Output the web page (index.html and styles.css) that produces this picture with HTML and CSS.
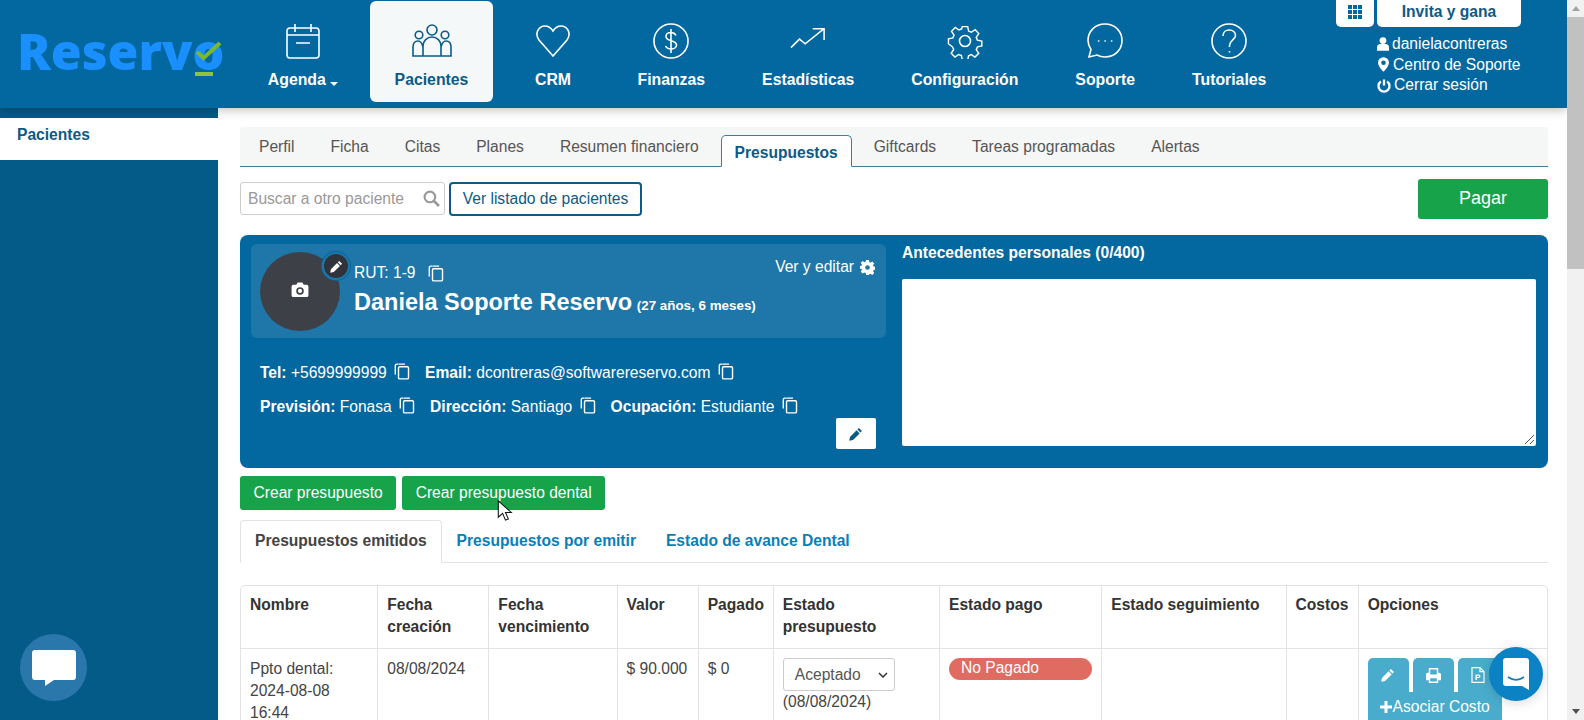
FILE: index.html
```html
<!DOCTYPE html>
<html lang="es">
<head>
<meta charset="utf-8">
<title>Reservo</title>
<link rel="stylesheet" href="styles.css">
</head>
<body>
<svg class="defs" width="0" height="0">
  <symbol id="copy" viewBox="0 0 16 18"><path d="M4 1.200h-1.600a1.500 1.500 0 0 0-1.500 1.500v9.600M5.600 4h8a1.300 1.300 0 0 1 1.300 1.300v10.200a1.300 1.300 0 0 1-1.300 1.300h-8a1.300 1.300 0 0 1-1.300-1.300V5.300a1.300 1.300 0 0 1 1.300-1.300zM4.300 1.200h7" fill="none" stroke="currentColor" stroke-width="1.500"/></symbol>
  <symbol id="pencil" viewBox="0 0 16 16"><path d="M11.300 1.200l3.500 3.500-1.700 1.700-3.500-3.500zM8.700 3.800l3.500 3.500-7.600 7.600-4.300.9.800-4.400z" fill="currentColor"/></symbol>
</svg>
<div class="page">
  <div class="viewport">
    <header class="topbar">
      <a class="logo"><span class="logo-text">Reservo</span>
        <svg class="logo-check" viewBox="0 0 30 36" width="30" height="36"><path d="M3 11l6.500 6L26 2" fill="none" stroke="#7ab82e" stroke-width="4"/><rect x="1" y="31" width="18" height="4" fill="#8cc63f"/></svg>
      </a>
      <nav class="mainnav">
        <a class="navitem nav-agenda">
          <svg class="navicon" viewBox="0 0 36 36"><rect x="2" y="5" width="32" height="30" rx="3"/><path d="M2 12h32M10 1v8M26 1v8M11 20h14"/></svg>
          <span>Agenda <i class="caret"></i></span>
        </a>
        <a class="navitem active">
          <svg class="navicon" viewBox="0 0 40 36"><circle cx="20" cy="7" r="5"/><circle cx="7" cy="12" r="3.800"/><circle cx="33" cy="12" r="3.800"/><path d="M11 33V23a9 9 0 0 1 18 0v10zM11 24c-1-4-3-6-5-6-3 0-5 2-5 6v9h10M29 24c1-4 3-6 5-6 3 0 5 2 5 6v9H29"/></svg>
          <span>Pacientes</span>
        </a>
        <a class="navitem nav-crm">
          <svg class="navicon" viewBox="0 0 36 36"><path d="M18 33L4 17C-1 10 4 3 10 3c4 0 6 2 8 5 2-3 4-5 8-5 6 0 11 7 6 14z"/></svg>
          <span>CRM</span>
        </a>
        <a class="navitem">
          <svg class="navicon" viewBox="0 0 36 36"><circle cx="18" cy="18" r="17"/><path d="M23 12.500c-1-2-3-3-5-3-3 0-5 1.500-5 4 0 5.500 10.500 3 10.500 8.500 0 2.500-2.500 4-5.500 4-2.500 0-4.500-1-5.500-3M18 6v24"/></svg>
          <span>Finanzas</span>
        </a>
        <a class="navitem">
          <svg class="navicon" viewBox="0 0 38 36"><path d="M1 25l9-9 6 5L36 5M24 5h12v12"/></svg>
          <span>Estadísticas</span>
        </a>
        <a class="navitem">
          <svg class="navicon" viewBox="0 0 36 36"><circle cx="18" cy="18" r="5.500"/><path d="M15 2h6l1 5 3 1.300 4.300-2.800 4 4.300-2.800 4.200 1.200 3 5 1v5.500l-4.800 1-1.400 3.200 2.800 4-4.200 4.200-4.100-2.800-3 1.300-1 4.600h-6l-1-4.800-3-1.200-4.200 2.800-4.200-4.200 2.800-4.100-1.300-3L-.400 21v-5.500l5-1 1.200-3L3 7.300 7.200 3l4.100 2.800 2.900-1.200z" transform="translate(1.800 1.800) scale(.9)"/></svg>
          <span>Configuración</span>
        </a>
        <a class="navitem">
          <svg class="navicon" viewBox="0 0 36 36"><path d="M18 1c10 0 17 7.500 17 16.500S28 34 18 34c-3 0-5.500-.6-8-2l-8 2 2-7.500C2 23.500 1 20.500 1 17.500 1 8.500 8 1 18 1z"/><path d="M11.500 18h.3M18 18h.3M24.500 18h.3" stroke-linecap="round"/></svg>
          <span>Soporte</span>
        </a>
        <a class="navitem">
          <svg class="navicon" viewBox="0 0 36 36"><circle cx="18" cy="18" r="17"/><path d="M12 13c0-4 3-6 6-6 4 0 6.500 2.500 6.500 5.500 0 4-6 5-6 10v1.500M18.500 28v1.500"/></svg>
          <span>Tutoriales</span>
        </a>
      </nav>
      <div class="usermenu">
        <div class="usertop">
          <a class="gridbtn"><svg viewBox="0 0 14 14" width="14" height="14"><path d="M0 0h4v4H0zM5 0h4v4H5zM10 0h4v4h-4zM0 5h4v4H0zM5 5h4v4H5zM10 5h4v4h-4zM0 10h4v4H0zM5 10h4v4H5zM10 10h4v4h-4z" fill="#03689f"/></svg></a>
          <a class="invite">Invita y gana</a>
        </div>
        <a class="userline"><svg viewBox="0 0 14 16" width="12" height="14"><circle cx="7" cy="4" r="4" fill="#fff"/><path d="M0 16v-4c0-3 2-4 4-4h6c2 0 4 1 4 4v4z" fill="#fff"/></svg>danielacontreras</a>
        <a class="userline"><svg class="pin" viewBox="0 0 12 16" width="11" height="15"><path fill-rule="evenodd" d="M6 0a6 6 0 0 1 6 6c0 3-4 8-6 10C4 14 0 9 0 6a6 6 0 0 1 6-6zm0 3.500a2.500 2.500 0 1 0 0 5 2.500 2.500 0 0 0 0-5z" fill="#fff"/></svg>Centro de Soporte</a>
        <a class="userline"><svg viewBox="0 0 16 16" width="14" height="15"><path d="M4.500 3.500a6.300 6.300 0 1 0 7 0M8 1v7" fill="none" stroke="#fff" stroke-width="2.600"/></svg>Cerrar sesión</a>
      </div>
    </header>
    <div class="content">
      <aside class="sidebar">
        <a class="sideitem">Pacientes</a>
      </aside>
      <main class="main">
        <div class="maintabs">
          <a>Perfil</a><a>Ficha</a><a>Citas</a><a>Planes</a><a>Resumen financiero</a><a class="current">Presupuestos</a><a>Giftcards</a><a>Tareas programadas</a><a>Alertas</a>
        </div>
        <div class="searchrow">
          <div class="search"><span>Buscar a otro paciente</span>
            <svg viewBox="0 0 16 16" width="17" height="17"><circle cx="6.500" cy="6.500" r="5" fill="none" stroke="#999" stroke-width="2"/><path d="M10 10l5 5" stroke="#999" stroke-width="2.500"/></svg>
          </div>
          <a class="outlinebtn">Ver listado de pacientes</a>
          <a class="paybtn">Pagar</a>
        </div>
        <section class="patient">
          <div class="patient-left">
            <div class="idpanel">
              <div class="avatar">
                <svg viewBox="0 0 18 16" width="18" height="15"><path fill-rule="evenodd" d="M2 3h3l1.500-2.500h5L13 3h3a2 2 0 0 1 2 2v9a2 2 0 0 1-2 2H2a2 2 0 0 1-2-2V5a2 2 0 0 1 2-2zm7 2.500a4 4 0 1 0 0 8 4 4 0 0 0 0-8zm0 1.800a2.200 2.200 0 1 1 0 4.400 2.200 2.200 0 0 1 0-4.400z" fill="#fff"/></svg>
                <span class="avatar-edit"><svg width="13" height="13"><use href="#pencil"/></svg></span>
              </div>
              <div class="idtext">
                <div class="rut">RUT: 1-9 <svg class="copy" width="16" height="17"><use href="#copy"/></svg></div>
                <div class="name">Daniela Soporte Reservo <small>(27 años, 6 meses)</small></div>
              </div>
              <a class="viewedit">Ver y editar
                <svg viewBox="0 0 16 16" width="15" height="15"><path fill-rule="evenodd" d="M6.500 0h3l.4 2.200 1.300.6L13.100 1.500l2.100 2.100-1.300 1.900.6 1.300 2.200.4v3l-2.200.4-.6 1.300 1.300 1.900-2.100 2.100-1.900-1.300-1.300.6L9.500 16h-3l-.4-2.200-1.300-.6-1.900 1.300-2.100-2.100 1.300-1.900-.6-1.300L-.700 9.500v-3l2.200-.4.600-1.300L.8 3 2.900 1l1.900 1.300 1.300-.6zM8 5.500a2.500 2.500 0 1 0 0 5 2.500 2.500 0 0 0 0-5z" fill="#fff"/></svg>
              </a>
            </div>
            <div class="detail first">
              <span class="field"><b>Tel:</b> +5699999999 <svg class="copy" width="16" height="17"><use href="#copy"/></svg></span>
              <span class="field"><b>Email:</b> dcontreras@softwarereservo.com <svg class="copy" width="16" height="17"><use href="#copy"/></svg></span>
            </div>
            <div class="detail">
              <span class="field"><b>Previsión:</b> Fonasa <svg class="copy" width="16" height="17"><use href="#copy"/></svg></span>
              <span class="field"><b>Dirección:</b> Santiago <svg class="copy" width="16" height="17"><use href="#copy"/></svg></span>
              <span class="field"><b>Ocupación:</b> Estudiante <svg class="copy" width="16" height="17"><use href="#copy"/></svg></span>
            </div>
            <div class="patient-foot"><a class="editbtn"><svg width="14" height="14"><use href="#pencil"/></svg></a></div>
          </div>
          <div class="patient-right">
            <div class="ant-title">Antecedentes personales (0/400)</div>
            <div class="ant-box"><svg class="grip" viewBox="0 0 11 11" width="11" height="11"><path d="M1 10L10 1M6 10l4-4" stroke="#555" stroke-width="1"/></svg></div>
          </div>
        </section>
        <div class="createrow">
          <a class="greenbtn">Crear presupuesto</a>
          <a class="greenbtn">Crear presupuesto dental</a>
        </div>
        <div class="subtabs">
          <a class="sub-current">Presupuestos emitidos</a>
          <a>Presupuestos por emitir</a>
          <a>Estado de avance Dental</a>
        </div>
        <table class="budget">
          <colgroup><col class="c1"><col class="c2"><col class="c3"><col class="c4"><col class="c5"><col class="c6"><col class="c7"><col class="c8"><col class="c9"><col class="c10"></colgroup>
          <thead>
            <tr><th>Nombre</th><th>Fecha creación</th><th>Fecha vencimiento</th><th>Valor</th><th>Pagado</th><th>Estado presupuesto</th><th>Estado pago</th><th>Estado seguimiento</th><th>Costos</th><th>Opciones</th></tr>
          </thead>
          <tbody>
            <tr>
              <td>Ppto dental: 2024-08-08 16:44</td>
              <td>08/08/2024</td>
              <td></td>
              <td>$ 90.000</td>
              <td>$ 0</td>
              <td><div class="selectbox">Aceptado <svg viewBox="0 0 10 6" width="10" height="6"><path d="M1 1l4 4 4-4" fill="none" stroke="#333" stroke-width="1.500"/></svg></div>(08/08/2024)</td>
              <td><span class="pill">No Pagado</span></td>
              <td></td>
              <td></td>
              <td>
                <div class="actions">
                  <a class="act"><svg width="14" height="14"><use href="#pencil"/></svg></a>
                  <a class="act"><svg viewBox="0 0 16 16" width="15" height="15"><path fill-rule="evenodd" d="M3 0h10v5h1a2 2 0 0 1 2 2v6h-3v3H3v-3H0V7a2 2 0 0 1 2-2h1zm1.500 1.500V7h7V1.500zM4.500 11v3.500h7V11z" fill="#fff"/></svg></a>
                  <a class="act"><svg viewBox="0 0 14 16" width="14" height="16"><path d="M1 .7h8l4 4v10.600H1zM9 .7v4h4" fill="none" stroke="#fff" stroke-width="1.200"/><path d="M4.500 7.500h3.200a1.800 1.800 0 0 1 0 3.600H6v2H4.500zM6 8.700v1.300h1.500a.65.65 0 0 0 0-1.300z" fill="#fff"/></svg></a>
                  <a class="act wide"><svg viewBox="0 0 12 12" width="12" height="12"><path d="M4.500 0h3v4.500H12v3H7.500V12h-3V7.500H0v-3h4.500z" fill="#fff"/></svg>Asociar Costo</a>
                </div>
              </td>
            </tr>
          </tbody>
        </table>
      </main>
    </div>
  </div>
  <div class="scrollbar"><i class="arrow up"></i><div class="thumb"></div><i class="arrow down"></i></div>
</div>
<a class="chat-left"><svg viewBox="0 0 44 36" width="44" height="36"><path d="M3 0h38a3 3 0 0 1 3 3v24a3 3 0 0 1-3 3H22l-9 6v-6H3a3 3 0 0 1-3-3V3a3 3 0 0 1 3-3z" fill="#fff"/></svg></a>
<a class="chat-right"><svg viewBox="0 0 26 32" width="26" height="32"><path d="M3 0h20a3 3 0 0 1 3 3v29l-7-4H3a3 3 0 0 1-3-3V3a3 3 0 0 1 3-3z" fill="#fff"/><path d="M5 19c5 3.500 11 3.500 16 0" fill="none" stroke="#0a7fc0" stroke-width="1.800"/></svg></a>
<svg class="cursor" viewBox="0 0 16 24" width="16" height="23"><path d="M1 1v17l4.500-4 3 7 3-1.300-3-6.700h6z" fill="#fff" stroke="#111" stroke-width="1.100"/></svg>
</body>
</html>
```
FILE: styles.css
```css
* { box-sizing: border-box; }
html, body { margin: 0; height: 720px; overflow: hidden; }
body { font-family: "Liberation Sans", Arial, sans-serif; font-size: 15.600px; color: #333; background: #fff; }
a { color: inherit; text-decoration: none; }
.defs { position: absolute; }

.page { display: flex; height: 720px; }
.viewport { flex: 1; min-width: 0; display: flex; flex-direction: column; }

.topbar { height: 108px; background: #03689f; display: flex; color: #fff; box-shadow: 0 2px 10px rgba(0,0,0,.25); position: relative; z-index: 2; }
.logo { width: 240px; flex: none; position: relative; }
.logo-text { position: absolute; left: 17px; top: 17px; font-family: "Open Sans", "Liberation Sans", sans-serif; font-size: 50px; font-weight: 800; color: #1a8fff; line-height: 68px; }
.logo-check { position: absolute; left: 194px; top: 41px; }
.mainnav { display: flex; flex: none; }
.navitem { display: flex; flex-direction: column; align-items: center; height: 101px; margin-top: 1px; padding: 22px 28.500px 0; border-radius: 6px; font-weight: 700; font-size: 15.800px; }
.navitem span { margin-top: 12px; line-height: 18px; white-space: nowrap; }
.navicon { width: 36px; height: 36px; fill: none; stroke: #fff; stroke-width: 1.600; }
.nav-agenda { width: 126px; margin-right: 4px; padding-left: 20px; padding-right: 20px; }
.navitem.active { background: #f5f8f9; color: #0c5a85; width: 123px; padding-left: 0; padding-right: 0; }
.navitem.active .navicon { stroke: #0c5a85; width: 40px; }
.nav-crm { width: 112px; margin-left: 4px; }
.caret { display: inline-block; border: 4px solid transparent; border-top-color: #fff; border-bottom: 0; vertical-align: -1px; }
.usermenu { position: absolute; left: 1377px; top: 0; display: flex; flex-direction: column; color: #fff; }
.usertop { display: flex; gap: 3px; margin-left: -41px; height: 27px; margin-bottom: 7px; }
.gridbtn { width: 38px; background: #fff; border-radius: 0 0 5px 5px; display: flex; align-items: center; justify-content: center; padding-bottom: 4px; }
.invite { width: 144px; background: #fff; border-radius: 0 0 5px 5px; color: #0c5a85; font-weight: 700; text-align: center; line-height: 24px; }
.userline { display: flex; align-items: center; gap: 3px; height: 20.500px; white-space: nowrap; }
.userline .pin { margin: 0 1px; }

.content { flex: 1; display: flex; min-height: 0; }
.sidebar { width: 218px; flex: none; background: #045b88; padding-top: 10px; }
.sideitem { display: block; background: #fff; height: 42px; padding-left: 17px; line-height: 34px; color: #0c5a85; font-weight: 700; }
.main { flex: 1; min-width: 0; padding: 19px 19px 0 22px; }

.maintabs { height: 40px; background: #f5f6f6; border-bottom: 1px solid #3f7d9f; border-radius: 3px 3px 0 0; display: flex; align-items: flex-start; padding-left: 1px; }
.maintabs a { padding: 11px 18px 0; color: #555; line-height: 18px; white-space: nowrap; }
.maintabs a.current { height: 32px; margin-top: 8px; padding: 8px 13px 0; margin-left: 4px; margin-right: 4px; font-weight: 700; color: #0c5a85; background: #fff; border: 1px solid #3f7d9f; border-bottom-color: #fff; border-radius: 5px 5px 0 0; }

.searchrow { display: flex; align-items: center; margin-top: 12px; height: 40px; }
.search { width: 205px; height: 33px; margin-bottom: 1px; border: 1px solid #ccc; border-radius: 3px; display: flex; align-items: center; justify-content: space-between; padding: 0 4px 0 7px; color: #999; white-space: nowrap; }
.outlinebtn { margin-left: 4px; height: 34px; width: 193px; border: 2px solid #0c5a85; border-radius: 4px; color: #0c5a85; text-align: center; line-height: 30px; white-space: nowrap; }
.paybtn { margin-left: auto; width: 130px; height: 40px; background: #16a34a; border-radius: 3px; color: #fff; text-align: center; line-height: 38px; font-size: 18px; }

.patient { margin-top: 16px; height: 233px; background: #03689f; border-radius: 8px; padding: 9px 12px 0 11px; display: flex; gap: 16px; color: #fff; }
.patient-left { width: 635px; flex: none; }
.idpanel { height: 94px; background: #1f76a8; border-radius: 6px; padding: 8px 9px; display: flex; position: relative; }
.avatar { width: 80px; height: 79px; padding-bottom: 4px; border-radius: 50%; background: #3d4047; display: flex; align-items: center; justify-content: center; position: relative; flex: none; }
.avatar-edit { position: absolute; right: -10px; top: 0; width: 28px; height: 28px; border-radius: 50%; background: #30343a; border: 2px solid #1f76a8; box-shadow: 0 0 0 1px #03689f; color: #fff; display: flex; align-items: center; justify-content: center; }
.idtext { margin-left: 14px; flex: 1; padding-top: 11px; }
.rut { line-height: 20px; display: flex; align-items: center; gap: 9px; }
.name { font-size: 23.500px; font-weight: 700; line-height: 30px; margin-top: 4px; white-space: nowrap; }
.name small { font-size: 13.400px; margin-left: -2px; }
.viewedit { position: absolute; right: 11px; top: 13px; display: flex; align-items: center; gap: 6px; line-height: 20px; }
.copy { color: #fff; flex: none; vertical-align: -2px; margin-left: 3px; }
.detail { display: flex; gap: 15px; padding-left: 9px; margin-top: 14px; line-height: 20px; white-space: nowrap; }
.detail.first { margin-top: 25px; }
.patient-foot { display: flex; justify-content: flex-end; padding-right: 10px; margin-top: 1px; }
.editbtn { width: 40px; height: 31px; background: #fff; border-radius: 2px; color: #0c5a85; display: flex; align-items: center; justify-content: center; }
.patient-right { flex: 1; min-width: 0; }
.ant-title { font-weight: 700; line-height: 18px; margin-bottom: 17px; }
.ant-box { height: 167px; background: #fff; border-radius: 2px; position: relative; }
.grip { position: absolute; right: 1px; bottom: 1px; }

.createrow { display: flex; gap: 6px; margin-top: 8px; }
.greenbtn { background: #16a34a; color: #fff; border-radius: 3px; height: 34px; line-height: 33px; padding: 0 13.500px; white-space: nowrap; }

.subtabs { display: flex; margin-top: 10px; height: 43px; border-bottom: 1px solid #e3e3e3; font-weight: 700; color: #0a7fb5; }
.subtabs a { padding: 12px 15px 0; line-height: 18px; white-space: nowrap; }
.subtabs a.sub-current { color: #444; background: #fff; border: 1px solid #e3e3e3; border-bottom-color: #fff; height: 43px; border-radius: 4px 4px 0 0; padding: 11px 14px 0; }

.budget { margin-top: 22px; width: 1308px; table-layout: fixed; border-collapse: separate; border-spacing: 0; border: 1px solid #e3e3e3; border-radius: 5px; line-height: 22px; }
.budget th { text-align: left; vertical-align: top; padding: 8px 9px 8px; border-left: 1px solid #e3e3e3; border-bottom: 1px solid #e3e3e3; font-weight: 700; color: #333; height: 63px; }
.budget td { vertical-align: top; padding: 9px 9px; border-left: 1px solid #e3e3e3; color: #444; }
.budget th:first-child, .budget td:first-child { border-left: 0; }
.c1 { width: 136px; } .c2 { width: 111px; } .c3 { width: 128px; } .c4 { width: 81px; } .c5 { width: 75px; }
.c6 { width: 166px; } .c7 { width: 162px; } .c8 { width: 184px; } .c9 { width: 72px; } .c10 { width: 189px; }
.selectbox { width: 112px; height: 33px; margin-top: 0; border: 1px solid #ccc; border-radius: 3px; display: flex; align-items: center; justify-content: space-between; padding: 0 6px 0 11px; color: #555; }
.pill { display: block; height: 22px; margin-top: 0; background: #e06b60; color: #fff; border-radius: 11px; padding-left: 12px; line-height: 20px; }
.actions { display: flex; flex-wrap: wrap; column-gap: 4px; margin-top: 0; width: 146px; }
.act { width: 41px; height: 34px; background: #4aaccc; border-radius: 5px 5px 0 0; color: #fff; display: flex; align-items: center; justify-content: center; }
.act.wide { width: 134px; height: 30px; border-radius: 0; gap: 1px; white-space: nowrap; }

.scrollbar { width: 17px; flex: none; background: #f1f1f1; display: flex; flex-direction: column; align-items: center; position: relative; z-index: 3; }
.thumb { width: 17px; height: 252px; background: #c1c1c1; margin-bottom: auto; }
.arrow { display: block; flex: none; margin: 6px 0; border: 4px solid transparent; }
.arrow.up { border-bottom: 5px solid #a3a3a3; border-top: 0; margin-bottom: 6px; }
.arrow.down { border-top: 5px solid #505050; border-bottom: 0; }

.chat-left { position: fixed; left: 20px; top: 634px; width: 67px; height: 67px; border-radius: 50%; background: #2a78ab; display: flex; align-items: center; justify-content: center; z-index: 5; }
.chat-right { position: fixed; left: 1489px; top: 647px; width: 54px; height: 54px; border-radius: 50%; background: #0a82c4; display: flex; align-items: center; justify-content: center; box-shadow: 0 2px 12px rgba(0,0,0,.15); z-index: 5; }
.cursor { position: fixed; left: 497px; top: 500px; z-index: 6; }
```
